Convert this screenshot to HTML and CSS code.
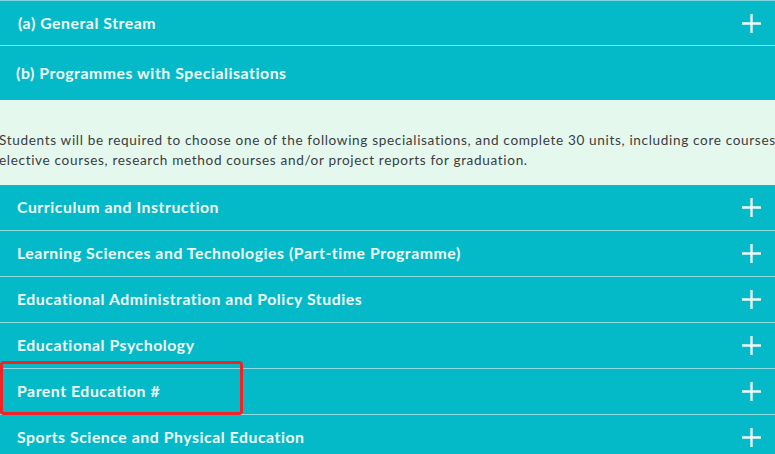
FILE: index.html
```html
<!DOCTYPE html>
<html>
<head>
<meta charset="utf-8">
<link rel="stylesheet" href="styles.css">
</head>
<body>
<div class="acc">
  <div class="row first"><span class="title">(a) General Stream</span><svg class="plus" viewBox="0 0 18 18"><path d="M9 0V18M0 9H18"/></svg></div>
  <div class="row tall"><span class="title">(b) Programmes with Specialisations</span></div>
  <div class="panel"><p>Students will be required to choose one of the following specialisations, and complete 30 units, including core courses,<br>elective courses, research method courses and/or project reports for graduation.</p></div>
  <div class="row"><span class="title">Curriculum and Instruction</span><svg class="plus" viewBox="0 0 18 18"><path d="M9 0V18M0 9H18"/></svg></div>
  <div class="row"><span class="title">Learning Sciences and Technologies (Part-time Programme)</span><svg class="plus" viewBox="0 0 18 18"><path d="M9 0V18M0 9H18"/></svg></div>
  <div class="row"><span class="title">Educational Administration and Policy Studies</span><svg class="plus" viewBox="0 0 18 18"><path d="M9 0V18M0 9H18"/></svg></div>
  <div class="row"><span class="title">Educational Psychology</span><svg class="plus" viewBox="0 0 18 18"><path d="M9 0V18M0 9H18"/></svg></div>
  <div class="row highlight"><span class="title">Parent Education #</span><svg class="plus" viewBox="0 0 18 18"><path d="M9 0V18M0 9H18"/></svg><span class="mark"></span></div>
  <div class="row"><span class="title">Sports Science and Physical Education</span><svg class="plus" viewBox="0 0 18 18"><path d="M9 0V18M0 9H18"/></svg></div>
</div>
</body>
</html>
```
FILE: styles.css
```css
html, body {
  margin: 0;
  padding: 0;
  overflow: hidden;
  background: #05bac8;
}
.acc {
  width: 775px;
  border-top: 1px solid #7fd6de;
  font-family: Lato, "Open Sans", sans-serif;
}
.row {
  position: relative;
  height: 45px;
  box-sizing: content-box;
  display: flex;
  align-items: center;
  justify-content: space-between;
  padding: 0 14px 0 17px;
  background: #05bac8;
  border-bottom: 1px solid #8fdbe2;
}
.title {
  color: #effaf6;
  font-weight: 700;
  font-size: 15.8px;
  letter-spacing: 0.55px;
  margin-bottom: 2px;
}
.row.first {
  height: 44px;
  padding-left: 18px;
}
.row.tall {
  height: 54px;
  padding-left: 16px;
  border-bottom: none;
}
.plus {
  width: 19px;
  height: 19px;
  flex: none;
}
.plus path {
  stroke: #f0fbfa;
  stroke-width: 2.2;
  fill: none;
}
.panel {
  background: #e5f8ee;
  height: 85px;
  box-sizing: border-box;
  padding-top: 30px;
  overflow: hidden;
}
.panel p {
  margin: 0 0 0 -1px;
  white-space: nowrap;
  font-size: 13.6px;
  line-height: 20px;
  letter-spacing: 0.65px;
  color: #3a3d3f;
}
.mark {
  position: absolute;
  left: 0;
  top: -8px;
  width: 237px;
  height: 48px;
  border: 3px solid #ef2424;
  border-radius: 4px;
}
```
